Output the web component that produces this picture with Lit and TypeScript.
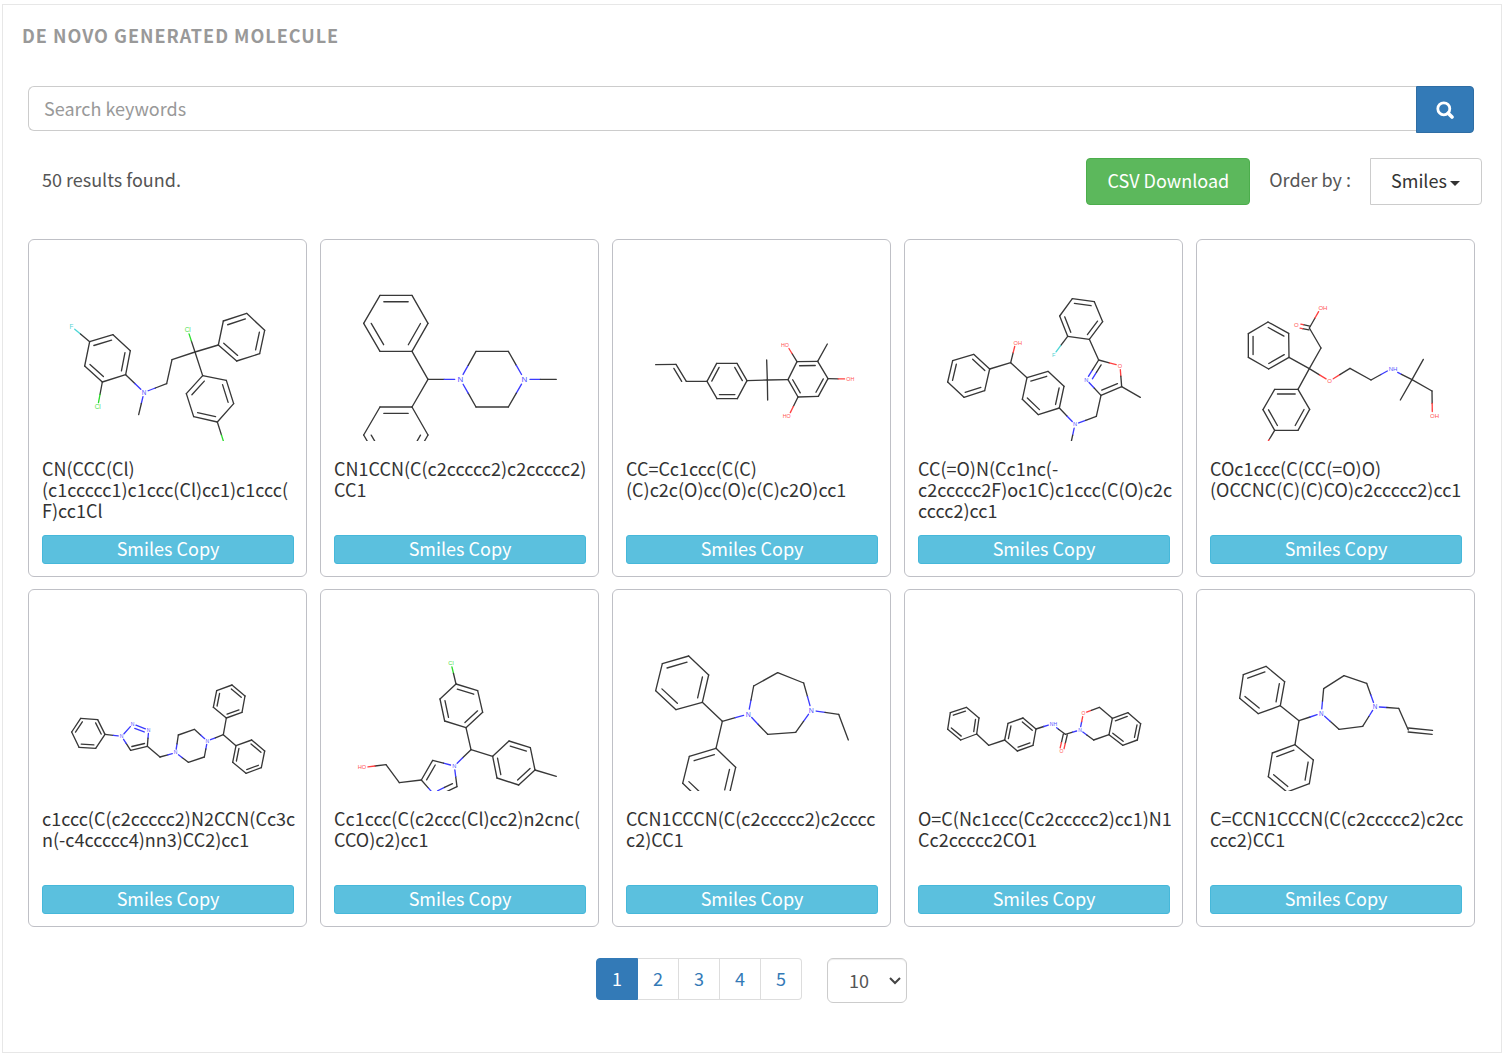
import { LitElement, html, css, svg, nothing } from "lit";
import { customElement, property } from "lit/decorators.js";

type Atom = [x: number, y: number, label?: string];
type Ring = [atoms: number[], doubles: string];

interface Molecule {
  smiles: string;
  top: number;
  font: number;
  atoms: Atom[];
  /** Closed loops; each "1" marks a double bond from that atom to the next. */
  rings: Ring[];
  /** Single bonds outside the rings. */
  bonds: [number, number][];
  /** Double bonds outside the rings; side 0 is centred on the bond. */
  doubles?: [number, number, number][];
}

const MOLECULES: Molecule[] = [
  {
    smiles: "CN(CCC(Cl)(c1ccccc1)c1ccc(Cl)cc1)c1ccc(F)cc1Cl",
    top: 153,
    font: 19,
    atoms: [
      [130, 109, "F"], [185, 155], [255, 134], [307, 182], [293, 254], [223, 276], [170, 228],
      [209, 351, "Cl"], [348, 307, "N"], [332, 374], [416, 281], [432, 209], [501, 186],
      [479, 119, "Cl"], [571, 165], [586, 93], [656, 70], [710, 121], [695, 191], [626, 213],
      [524, 257], [595, 271], [617, 341], [568, 396], [497, 380], [475, 311], [593, 475, "Cl"],
    ],
    rings: [
      [[1, 2, 3, 4, 5, 6], "101010"],
      [[14, 15, 16, 17, 18, 19], "010101"],
      [[20, 21, 22, 23, 24, 25], "010101"],
    ],
    bonds: [[0, 1], [5, 7], [4, 8], [8, 9], [8, 10], [10, 11], [11, 12], [12, 13], [12, 14], [12, 20], [23, 26]],
  },
  {
    smiles: "CN1CCN(C(c2ccccc2)c2ccccc2)CC1",
    top: 123,
    font: 24,
    atoms: [
      [276, 214], [324, 130], [276, 46], [180, 46], [131, 130], [180, 214], [324, 298],
      [276, 381], [324, 465], [276, 549], [180, 549], [131, 465], [180, 381],
      [421, 298, "N"], [468, 214], [565, 214], [613, 298, "N"], [565, 381], [468, 381], [709, 298],
    ],
    rings: [
      [[0, 1, 2, 3, 4, 5], "101010"],
      [[7, 8, 9, 10, 11, 12], "010101"],
      [[13, 14, 15, 16, 17, 18], "000000"],
    ],
    bonds: [[0, 6], [6, 7], [6, 13], [16, 19]],
  },
  {
    smiles: "CC=Cc1ccc(C(C)(C)c2c(O)cc(O)c(C)c2O)cc1",
    top: 243,
    font: 16,
    atoms: [
      [131, 134], [192, 133], [223, 184], [285, 184], [314, 130], [375, 130], [405, 182],
      [376, 236], [315, 236], [466, 180], [464, 120], [467, 240], [528, 179], [555, 125],
      [617, 124], [648, 176], [619, 229], [558, 231], [525, 76, "HO"], [646, 72],
      [709, 177, "OH"], [530, 288, "HO"],
    ],
    rings: [
      [[3, 4, 5, 6, 7, 8], "101010"],
      [[12, 13, 14, 15, 16, 17], "010101"],
    ],
    bonds: [[0, 1], [2, 3], [6, 9], [9, 10], [9, 11], [9, 12], [13, 18], [14, 19], [15, 20], [17, 21]],
    doubles: [[1, 2, 1]],
  },
  {
    smiles: "CC(=O)N(Cc1nc(-c2ccccc2F)oc1C)c1ccc(C(O)c2ccccc2)cc1",
    top: 123,
    font: 17,
    atoms: [
      [257, 267], [209, 223], [146, 242], [131, 306], [180, 352], [242, 332], [320, 248],
      [335, 188, "OH"], [369, 293], [432, 274], [480, 319], [466, 384], [403, 404], [355, 358],
      [513, 433, "N"], [499, 498], [577, 409], [591, 346], [547, 299, "N"], [584, 240],
      [648, 257, "O"], [653, 320], [709, 352], [556, 178], [596, 125], [571, 65], [505, 56],
      [467, 108], [491, 169], [449, 225, "F"],
    ],
    rings: [
      [[0, 1, 2, 3, 4, 5], "101010"],
      [[8, 9, 10, 11, 12, 13], "101010"],
      [[17, 18, 19, 20, 21], "01001"],
      [[23, 24, 25, 26, 27, 28], "101010"],
    ],
    bonds: [[0, 6], [6, 7], [6, 8], [11, 14], [14, 15], [14, 16], [16, 17], [21, 22], [19, 23], [28, 29]],
  },
  {
    smiles: "COc1ccc(C(CC(=O)O)(OCCNC(C)(C)CO)c2ccccc2)cc1",
    top: 123,
    font: 18,
    atoms: [
      [279, 232], [278, 160], [216, 126], [157, 161], [157, 232], [218, 267], [340, 266],
      [375, 204], [340, 144], [301, 136, "O"], [374, 84, "OH"], [401, 303, "O"], [462, 265],
      [525, 300], [585, 267, "NH"], [648, 299], [682, 238], [613, 360], [708, 333],
      [709, 407, "OH"], [306, 328], [341, 388], [306, 451], [236, 451], [201, 389], [236, 328],
      [203, 506, "O"],
    ],
    rings: [
      [[0, 1, 2, 3, 4, 5], "010101"],
      [[20, 21, 22, 23, 24, 25], "010101"],
    ],
    bonds: [
      [0, 6], [6, 7], [7, 8], [8, 10], [6, 11], [11, 12], [12, 13], [13, 14], [14, 15],
      [15, 16], [15, 17], [15, 18], [18, 19], [6, 20], [23, 26],
    ],
    doubles: [[8, 9, 0]],
  },
  {
    smiles: "c1ccc(C(c2ccccc2)N2CCN(Cc3cn(-c4ccccc4)nn3)CC2)cc1",
    top: 213,
    font: 15,
    atoms: [
      [231, 223], [209, 179], [158, 175], [131, 216], [153, 262], [203, 265], [281, 229, "N"],
      [314, 192, "N"], [362, 210, "N"], [358, 259], [308, 271], [396, 291], [443, 278, "N"],
      [451, 225], [499, 208], [538, 243, "N"], [529, 291], [481, 307], [586, 224], [595, 174],
      [642, 157], [651, 108], [612, 75], [566, 92], [556, 142], [624, 257], [671, 240],
      [710, 273], [700, 323], [654, 340], [614, 307],
    ],
    rings: [
      [[0, 1, 2, 3, 4, 5], "101010"],
      [[6, 7, 8, 9, 10], "01010"],
      [[12, 13, 14, 15, 16, 17], "000000"],
      [[19, 20, 21, 22, 23, 24], "101010"],
      [[25, 26, 27, 28, 29, 30], "010101"],
    ],
    bonds: [[0, 6], [9, 11], [11, 12], [15, 18], [18, 19], [18, 25]],
  },
  {
    smiles: "Cc1ccc(C(c2ccc(Cl)cc2)n2cnc(CCO)c2)cc1",
    top: 153,
    font: 17,
    atoms: [
      [393, 69, "Cl"], [408, 132], [473, 152], [488, 217], [438, 263], [374, 243], [360, 177],
      [453, 329], [518, 349], [567, 303], [631, 323], [645, 390], [596, 435], [531, 414],
      [709, 409], [403, 378, "N"], [338, 361], [304, 420], [348, 470, "N"], [411, 440],
      [238, 428], [198, 374], [132, 382, "HO"],
    ],
    rings: [
      [[1, 2, 3, 4, 5, 6], "101010"],
      [[8, 9, 10, 11, 12, 13], "010101"],
      [[15, 16, 17, 18, 19], "01010"],
    ],
    bonds: [[0, 1], [4, 7], [7, 8], [11, 14], [7, 15], [17, 20], [20, 21], [21, 22]],
  },
  {
    smiles: "CCN1CCCN(C(c2ccccc2)c2ccccc2)CC1",
    top: 153,
    font: 21,
    atoms: [
      [271, 187], [290, 105], [230, 48], [151, 71], [131, 152], [192, 209], [331, 244],
      [312, 325], [371, 382], [352, 463], [272, 487], [212, 430], [232, 349], [409, 222, "N"],
      [425, 138], [497, 98], [575, 129], [598, 211, "N"], [551, 277], [467, 283], [680, 223],
      [709, 300],
    ],
    rings: [
      [[0, 1, 2, 3, 4, 5], "101010"],
      [[7, 8, 9, 10, 11, 12], "010101"],
      [[13, 14, 15, 16, 17, 18, 19], "0000000"],
    ],
    bonds: [[0, 6], [6, 7], [6, 13], [17, 20], [20, 21]],
  },
  {
    smiles: "O=C(Nc1ccc(Cc2ccccc2)cc1)N1Cc2ccccc2CO1",
    top: 273,
    font: 15,
    atoms: [
      [218, 162], [225, 114], [187, 82], [139, 98], [131, 148], [170, 180], [254, 196],
      [302, 180], [312, 130], [357, 114], [396, 147], [387, 196], [340, 213], [443, 132, "NH"],
      [484, 163], [472, 215, "O"], [528, 150, "N"], [538, 100, "O"], [586, 82], [625, 115],
      [615, 164], [569, 180], [672, 98], [710, 131], [700, 180], [656, 196],
    ],
    rings: [
      [[0, 1, 2, 3, 4, 5], "101010"],
      [[7, 8, 9, 10, 11, 12], "101010"],
      [[19, 22, 23, 24, 25, 20], "101010"],
    ],
    bonds: [
      [0, 6], [6, 7], [10, 13], [13, 14], [14, 16], [16, 17], [17, 18], [18, 19], [16, 21],
      [21, 20],
    ],
    doubles: [[14, 15, 0]],
  },
  {
    smiles: "C=CCN1CCCN(C(c2ccccc2)c2ccccc2)CC1",
    top: 153,
    font: 19,
    atoms: [
      [253, 197], [266, 125], [210, 79], [142, 104], [131, 175], [187, 221], [309, 242],
      [297, 314], [352, 360], [340, 431], [273, 456], [217, 410], [229, 339], [376, 220, "N"],
      [383, 146], [444, 107], [512, 130], [537, 200, "N"], [500, 259], [429, 268], [608, 205],
      [637, 270], [709, 277],
    ],
    rings: [
      [[0, 1, 2, 3, 4, 5], "101010"],
      [[7, 8, 9, 10, 11, 12], "010101"],
      [[13, 14, 15, 16, 17, 18, 19], "0000000"],
    ],
    bonds: [[0, 6], [6, 7], [6, 13], [17, 20], [20, 21]],
    doubles: [[21, 22, 0]],
  },
];

/** Lower edge of the drawing area; atoms below it keep their bond but lose their label. */
const CLIP = 600;

const elementClass = (label?: string) => {
  if (!label) return "c";
  if (label.includes("Cl")) return "cl";
  if (label.includes("N")) return "n";
  if (label.includes("F")) return "f";
  return "o";
};

@customElement("molecule-drawing")
class MoleculeDrawing extends LitElement {
  @property({ attribute: false }) molecule!: Molecule;

  static styles = css`
    :host { display: block; }
    svg { display: block; width: 100%; height: 201px; overflow: hidden; }
    line { stroke-width: 4; stroke-linecap: round; }
    text { font-family: "Liberation Sans", Arial, sans-serif; opacity: 0.85; }
    line.c { stroke: #383838; }
    line.n { stroke: #3b3bff; }
    line.o { stroke: #ff4040; }
    line.f { stroke: #4cd6d6; }
    line.cl { stroke: #2bdc2b; }
    text.n { fill: #3333ff; }
    text.o { fill: #ff3333; }
    text.f { fill: #33cccc; }
    text.cl { fill: #1fdc1f; }
  `;

  /** Clear space around a label, wider where the bond leaves past its "H". */
  private gap(atom: Atom, ux: number) {
    if (!atom[2]) return 0;
    const pastH = (atom[2] === "NH" || atom[2] === "OH") && ux > 0.6;
    return this.molecule.font * (pastH ? 1.25 : 0.7);
  }

  /** One stroke of a bond, in two colours when its atoms differ. */
  private stroke(a: Atom, b: Atom, dx = 0, dy = 0, trim = 0) {
    const length = Math.hypot(b[0] - a[0], b[1] - a[1]);
    const ux = (b[0] - a[0]) / length;
    const uy = (b[1] - a[1]) / length;
    const start = Math.max(this.gap(a, ux), trim);
    const end = length - Math.max(this.gap(b, -ux), trim);
    const at = (d: number) => [a[0] + ux * d + dx, a[1] + uy * d + dy];
    const part = (from: number, to: number, cls: string) => {
      const [x1, y1] = at(from);
      const [x2, y2] = at(to);
      return svg`<line class=${cls} x1=${x1} y1=${y1} x2=${x2} y2=${y2}></line>`;
    };
    const ca = elementClass(a[2]);
    const cb = elementClass(b[2]);
    if (ca === cb) return part(start, end, ca);
    return [part(start, length / 2, ca), part(length / 2, end, cb)];
  }

  private ring([ids, doubles]: Ring) {
    const atoms = ids.map((id) => this.molecule.atoms[id]);
    const cx = atoms.reduce((sum, a) => sum + a[0], 0) / atoms.length;
    const cy = atoms.reduce((sum, a) => sum + a[1], 0) / atoms.length;
    return atoms.map((a, i) => {
      const b = atoms[(i + 1) % atoms.length];
      const length = Math.hypot(b[0] - a[0], b[1] - a[1]);
      let nx = -(b[1] - a[1]) / length;
      let ny = (b[0] - a[0]) / length;
      if (nx * (cx - a[0]) + ny * (cy - a[1]) < 0) {
        nx = -nx;
        ny = -ny;
      }
      const off = length * 0.2;
      return [
        this.stroke(a, b),
        doubles[i] === "1" ? this.stroke(a, b, nx * off, ny * off, length * 0.12) : nothing,
      ];
    });
  }

  private double([ia, ib, side]: [number, number, number]) {
    const a = this.molecule.atoms[ia];
    const b = this.molecule.atoms[ib];
    const length = Math.hypot(b[0] - a[0], b[1] - a[1]);
    const nx = -(b[1] - a[1]) / length;
    const ny = (b[0] - a[0]) / length;
    if (side === 0) return [this.stroke(a, b, nx * 6, ny * 6), this.stroke(a, b, -nx * 6, -ny * 6)];
    const off = side * length * 0.2;
    return [this.stroke(a, b), this.stroke(a, b, nx * off, ny * off, length * 0.12)];
  }

  private label([x, y, label]: Atom) {
    if (!label || y + this.molecule.top > CLIP) return nothing;
    const size = this.molecule.font;
    const half = size * 0.38;
    const anchor = label === "HO" ? "end" : label.length === 2 && label !== "Cl" ? "start" : "middle";
    const tx = anchor === "end" ? x + half : anchor === "start" ? x - half : x;
    return svg`<text class=${elementClass(label)} x=${tx} y=${y + size * 0.36}
      font-size=${size} text-anchor=${anchor}>${label}</text>`;
  }

  render() {
    const m = this.molecule;
    return html`
      <svg viewBox="42 3 756 603" aria-hidden="true">
        <g transform="translate(0 ${m.top})">
          ${m.rings.map((r) => this.ring(r))}
          ${m.bonds.map(([a, b]) => this.stroke(m.atoms[a], m.atoms[b]))}
          ${(m.doubles ?? []).map((d) => this.double(d))}
          ${m.atoms.map((a) => this.label(a))}
        </g>
      </svg>
    `;
  }
}

@customElement("molecule-card")
class MoleculeCard extends LitElement {
  @property({ attribute: false }) molecule!: Molecule;

  static styles = css`
    :host { display: block; min-width: 0; }
    .card {
      box-sizing: border-box;
      height: 100%;
      display: flex;
      flex-direction: column;
      padding: 0 12px 12px 13px;
      border: 1px solid #bfc0c6;
      border-radius: 6px;
      background: #fff;
    }
    .smiles {
      flex: 1;
      min-height: 63px;
      margin: 17px -3px 14px 0;
      color: #333;
      line-height: 21px;
      overflow-wrap: anywhere;
    }
    .copy {
      box-sizing: border-box;
      height: 29px;
      padding: 0 0 2px;
      border: 1px solid #46b8da;
      border-radius: 3px;
      background: #5bc0de;
      color: #fff;
      font: inherit;
      line-height: 25px;
      cursor: pointer;
    }
  `;

  render() {
    return html`
      <article class="card">
        <molecule-drawing .molecule=${this.molecule}></molecule-drawing>
        <p class="smiles">${this.molecule.smiles}</p>
        <button class="copy" type="button"
          @click=${() => navigator.clipboard?.writeText(this.molecule.smiles)}>Smiles Copy</button>
      </article>
    `;
  }
}

@customElement("app-root")
class AppRoot extends LitElement {
  static styles = css`
    :host {
      display: block;
      padding: 4px 5px 6px 2px;
      background: #fff;
      color: #555;
      font-family: "Noto Sans CJK KR", "Noto Sans", sans-serif;
      font-size: 18px;
      line-height: 26px;
    }
    * { box-sizing: border-box; }
    button, input, select { font: inherit; }
    .panel { border: 1px solid #e7e7e7; padding-bottom: 49px; }
    .title {
      margin: 0;
      padding: 17px 19px 0;
      color: #999;
      font-size: 18px;
      font-weight: 700;
      line-height: 26px;
      letter-spacing: 1px;
      text-transform: uppercase;
    }
    .body { padding: 38px 26px 0 25px; }
    .search { display: flex; align-items: flex-start; }
    .search-input {
      flex: 1;
      min-width: 0;
      height: 45px;
      padding: 0 15px 2px;
      border: 1px solid #ccc;
      border-right: 0;
      border-radius: 6px 0 0 6px;
      background: #fff;
      color: #555;
    }
    .search-input::placeholder { color: #999; opacity: 1; }
    .search-button {
      display: grid;
      place-items: center;
      width: 58px;
      height: 47px;
      margin-right: 1px;
      padding: 0;
      border: 1px solid #2e6da4;
      border-radius: 0 4px 4px 0;
      background: #337ab7;
      color: #fff;
      cursor: pointer;
    }
    .search-icon { display: block; width: 18px; height: 18px; }
    .toolbar {
      display: flex;
      align-items: center;
      gap: 19px;
      margin: 25px -7px 34px 0;
      padding-left: 14px;
    }
    .count, .order-label { margin: 0; padding-bottom: 6px; }
    .count { flex: 1; }
    .download {
      height: 47px;
      padding: 0 20px 4px;
      border: 1px solid #4cae4c;
      border-radius: 4px;
      background: #5cb85c;
      color: #fff;
      cursor: pointer;
    }
    .order { position: relative; }
    .order::after {
      content: "";
      position: absolute;
      right: 22px;
      top: 23px;
      border: 5px solid transparent;
      border-top-color: #333;
      border-bottom: 0;
      pointer-events: none;
    }
    .order-select {
      display: block;
      height: 47px;
      padding: 0 34px 4px 20px;
      border: 1px solid #ccc;
      border-radius: 0 4px 4px 0;
      background: #fff;
      color: #333;
      appearance: none;
      cursor: pointer;
    }
    .grid {
      display: grid;
      grid-template-columns: repeat(5, minmax(0, 1fr));
      gap: 12px 13px;
    }
    .footer {
      display: flex;
      justify-content: center;
      align-items: flex-start;
      gap: 25px;
      margin-top: 31px;
    }
    .pages { display: flex; margin: 0; padding: 0; list-style: none; }
    .page {
      display: block;
      min-width: 41px;
      height: 42px;
      border: 1px solid #ddd;
      border-left: 0;
      color: #337ab7;
      line-height: 38px;
      text-align: center;
      text-decoration: none;
    }
    .page.current {
      min-width: 42px;
      border: 1px solid #337ab7;
      border-radius: 4px 0 0 4px;
      background: #337ab7;
      color: #fff;
    }
    .page.last { border-radius: 0 4px 4px 0; }
    .size { position: relative; }
    .size-select {
      display: block;
      width: 80px;
      height: 45px;
      padding: 0 0 2px 21px;
      border: 1px solid #ccc;
      border-radius: 6px;
      background: #fff;
      box-shadow: inset 0 1px 1px rgba(0, 0, 0, 0.075);
      color: #555;
      appearance: none;
    }
    .size-arrow {
      position: absolute;
      right: 6px;
      top: 18px;
      width: 12px;
      height: 9px;
      pointer-events: none;
    }
  `;

  render() {
    return html`
      <section class="panel">
        <h1 class="title">De novo generated molecule</h1>
        <div class="body">
          <form class="search" role="search" @submit=${(e: Event) => e.preventDefault()}>
            <input class="search-input" type="text" placeholder="Search keywords" aria-label="Search keywords" />
            <button class="search-button" type="submit" aria-label="Search">
              <svg class="search-icon" viewBox="0 0 18 18" aria-hidden="true">
                <circle cx="7.8" cy="7.8" r="6" fill="none" stroke="currentColor" stroke-width="2.8"></circle>
                <path d="M12.2 12.2 L16 16" stroke="currentColor" stroke-width="3.6" stroke-linecap="round"></path>
              </svg>
            </button>
          </form>
          <div class="toolbar">
            <p class="count">50 results found.</p>
            <button class="download" type="button">CSV Download</button>
            <label class="order-label" for="order">Order by :</label>
            <div class="order">
              <select class="order-select" id="order"><option>Smiles</option></select>
            </div>
          </div>
          <div class="grid">
            ${MOLECULES.map((m) => html`<molecule-card .molecule=${m}></molecule-card>`)}
          </div>
          <div class="footer">
            <ul class="pages">
              ${[1, 2, 3, 4, 5].map(
                (n) => html`<li><a class="page ${n === 1 ? "current" : n === 5 ? "last" : ""}"
                  href="#${n}" aria-current=${n === 1 ? "page" : nothing}>${n}</a></li>`,
              )}
            </ul>
            <div class="size">
              <select class="size-select" aria-label="Results per page"><option>10</option></select>
              <svg class="size-arrow" viewBox="0 0 12 9" aria-hidden="true">
                <path d="M1 2 L6 7 L11 2" fill="none" stroke="#444" stroke-width="2"></path>
              </svg>
            </div>
          </div>
        </div>
      </section>
    `;
  }
}
